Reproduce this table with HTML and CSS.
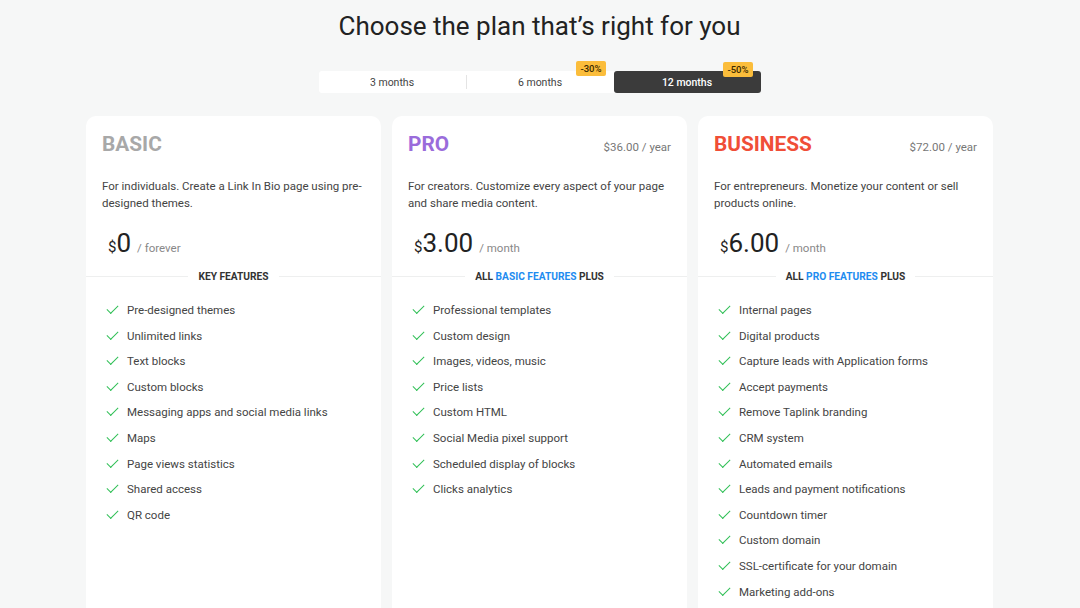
FILE: index.html
```html
<!DOCTYPE html>
<html>
<head>
<meta charset="utf-8">
<link rel="stylesheet" href="styles.css">
</head>
<body>
<div class="page">
  <h1 class="title">Choose the plan that’s right for you</h1>
  <div class="tabs">
    <div class="tab">3 months</div>
    <div class="sep"></div>
    <div class="tab">6 months<span class="badge">-30%</span></div>
    <div class="tab active">12 months<span class="badge">-50%</span></div>
  </div>
  <div class="cards">
    <div class="card">
      <div class="head"><span class="name basic">BASIC</span></div>
      <p class="desc">For individuals. Create a Link In Bio page using pre-designed themes.</p>
      <div class="price"><span class="cur">$</span><span class="amt">0</span><span class="per">/ forever</span></div>
      <div class="divider"><span>KEY FEATURES</span></div>
      <ul class="feats">
        <li>Pre-designed themes</li>
        <li>Unlimited links</li>
        <li>Text blocks</li>
        <li>Custom blocks</li>
        <li>Messaging apps and social media links</li>
        <li>Maps</li>
        <li>Page views statistics</li>
        <li>Shared access</li>
        <li>QR code</li>
      </ul>
    </div>
    <div class="card">
      <div class="head"><span class="name pro">PRO</span><span class="year">$36.00 / year</span></div>
      <p class="desc">For creators. Customize every aspect of your page and share media content.</p>
      <div class="price"><span class="cur">$</span><span class="amt">3.00</span><span class="per">/ month</span></div>
      <div class="divider"><span>ALL <b>BASIC FEATURES</b> PLUS</span></div>
      <ul class="feats">
        <li>Professional templates</li>
        <li>Custom design</li>
        <li>Images, videos, music</li>
        <li>Price lists</li>
        <li>Custom HTML</li>
        <li>Social Media pixel support</li>
        <li>Scheduled display of blocks</li>
        <li>Clicks analytics</li>
      </ul>
    </div>
    <div class="card">
      <div class="head"><span class="name business">BUSINESS</span><span class="year">$72.00 / year</span></div>
      <p class="desc">For entrepreneurs. Monetize your content or sell products online.</p>
      <div class="price"><span class="cur">$</span><span class="amt">6.00</span><span class="per">/ month</span></div>
      <div class="divider"><span>ALL <b>PRO FEATURES</b> PLUS</span></div>
      <ul class="feats">
        <li>Internal pages</li>
        <li>Digital products</li>
        <li>Capture leads with Application forms</li>
        <li>Accept payments</li>
        <li>Remove Taplink branding</li>
        <li>CRM system</li>
        <li>Automated emails</li>
        <li>Leads and payment notifications</li>
        <li>Countdown timer</li>
        <li>Custom domain</li>
        <li>SSL-certificate for your domain</li>
        <li>Marketing add-ons</li>
      </ul>
    </div>
  </div>
</div>
</body>
</html>
```

FILE: styles.css
```css
* { box-sizing: border-box; }
html, body { margin: 0; padding: 0; }
body {
  background: #f6f7f7;
  font-family: Roboto, "Liberation Sans", sans-serif;
  color: #333;
  height: 608px;
  overflow: hidden;
}
.page {
  display: flex;
  flex-direction: column;
  align-items: center;
  padding-top: 11px;
  padding-right: 1px;
}
.title {
  margin: 0;
  font-size: 26px;
  line-height: 30px;
  font-weight: 400;
  color: #222;
}
.tabs {
  margin-top: 30px;
  width: 442px;
  height: 22px;
  background: #fff;
  border-radius: 3px;
  display: flex;
  align-items: center;
}
.tab {
  position: relative;
  flex: 1;
  height: 22px;
  line-height: 24px;
  text-align: center;
  font-size: 10.5px;
  color: #444;
}
.sep {
  width: 1px;
  height: 14px;
  background: #e4e4e4;
}
.tab.active {
  background: #3b3b3b;
  color: #fff;
  border-radius: 3px;
  font-weight: 500;
}
.badge {
  position: absolute;
  right: 8px;
  top: -10px;
  background: #fbbd3b;
  color: #3a2a00;
  font-size: 9.5px;
  font-weight: 500;
  line-height: 15px;
  padding: 0 4px;
  border-radius: 2px;
}
.tab.active .badge { top: -9px; }
.cards {
  margin-top: 23px;
  display: flex;
  gap: 11px;
}
.card {
  width: 295px;
  height: 520px;
  background: #fff;
  border-radius: 10px;
  padding-top: 16px;
}
.head {
  display: flex;
  justify-content: space-between;
  align-items: baseline;
  padding: 0 16px;
  height: 24px;
}
.name {
  font-size: 20.8px;
  line-height: 24px;
  font-weight: 700;
}
.name.basic { color: #a8a8a8; }
.name.pro { color: #9a6cdb; }
.name.business { color: #f04e37; }
.year {
  font-size: 11.5px;
  color: #777;
}
.desc {
  margin: 22px 0 0;
  padding: 0 16px;
  font-size: 11.5px;
  line-height: 17px;
  color: #444;
}
.price {
  margin-top: 18px;
  padding: 0 22px;
  display: flex;
  align-items: baseline;
  height: 26px;
}
.cur { font-size: 15px; color: #222; }
.amt { font-size: 26px; color: #222; line-height: 26px; }
.per { font-size: 11.5px; color: #888; margin-left: 6px; }
.divider {
  margin-top: 12px;
  display: flex;
  align-items: center;
  height: 16px;
}
.divider::before, .divider::after {
  content: "";
  flex: 1;
  height: 1px;
  background: #eeefef;
}
.divider span {
  padding: 0 10px;
  font-size: 10.2px;
  font-weight: 700;
  color: #333;
}
.divider b { color: #1e8cf0; font-weight: 700; }
.feats {
  list-style: none;
  margin: 18px 0 0;
  padding: 0 20px;
}
.feats li {
  position: relative;
  padding-left: 21px;
  height: 25.6px;
  line-height: 17px;
  font-size: 11.5px;
  color: #444;
}
.feats li::before {
  content: "";
  position: absolute;
  left: 1px;
  top: 3px;
  width: 10px;
  height: 5px;
  border-left: 1.7px solid #2fbf55;
  border-bottom: 1.7px solid #2fbf55;
  transform: rotate(-45deg);
}
```
